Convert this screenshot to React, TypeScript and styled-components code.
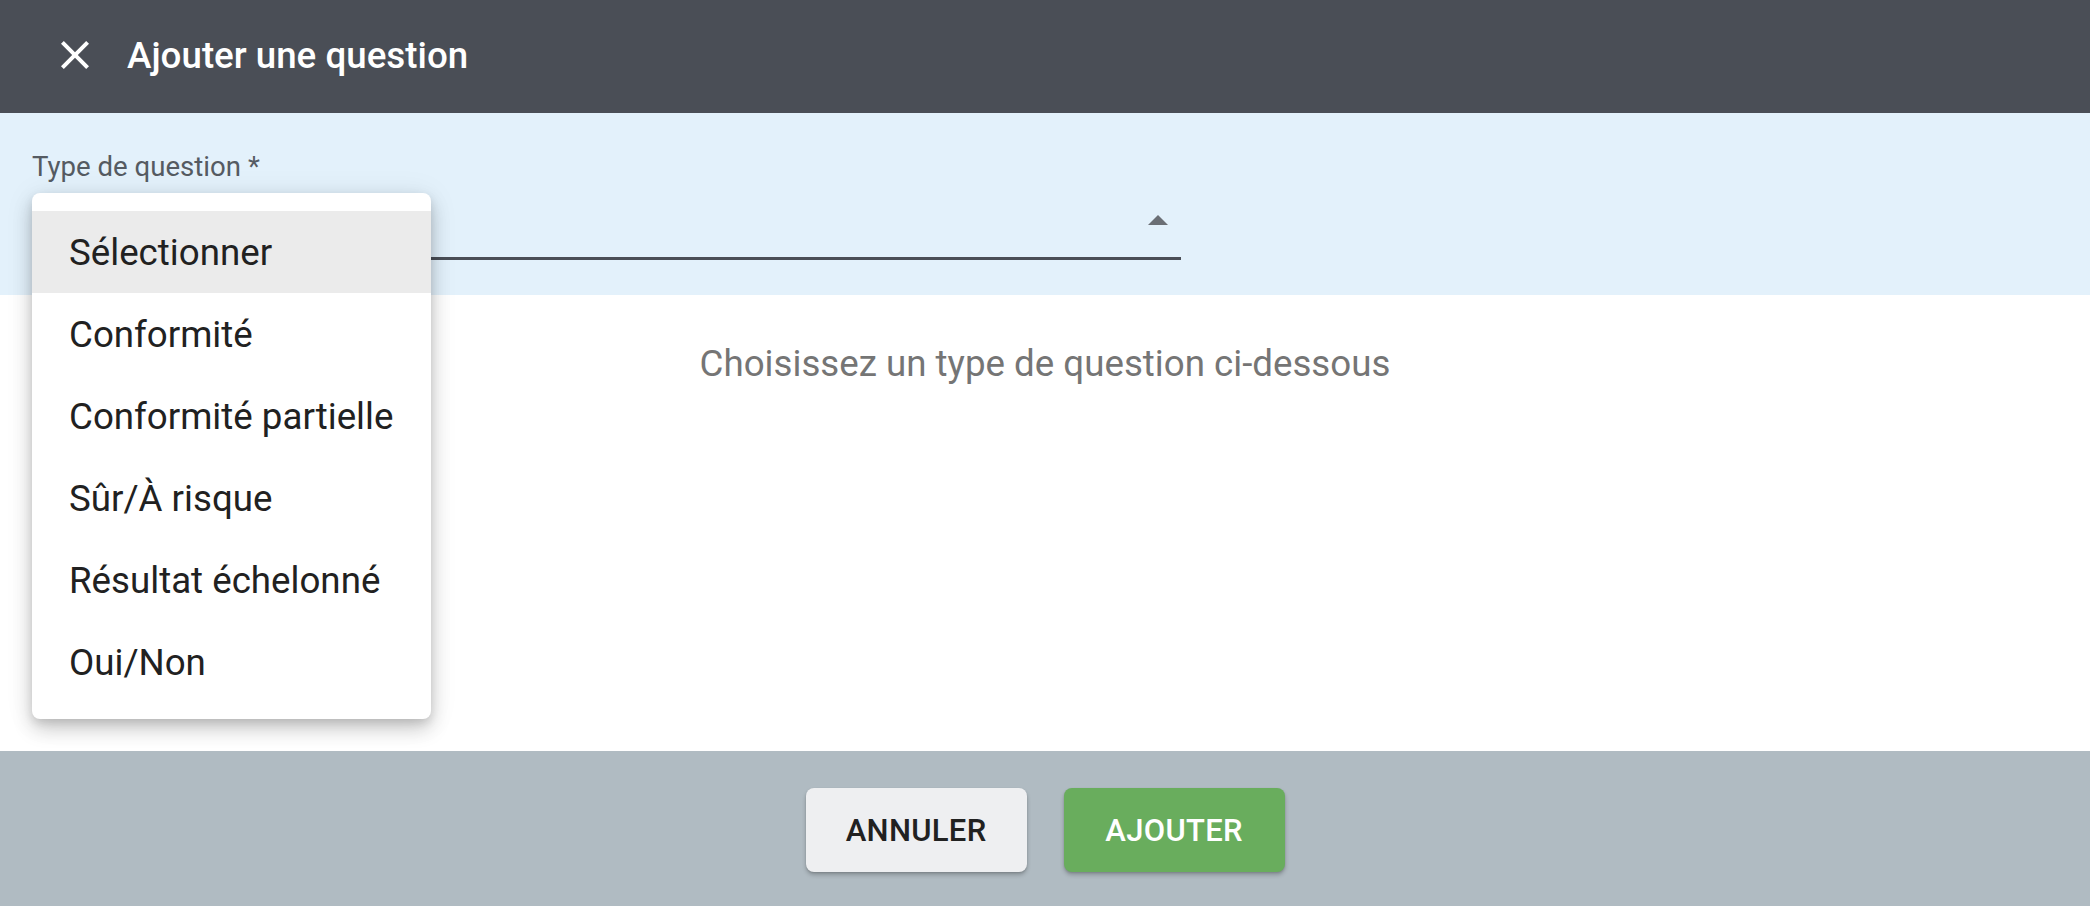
import styled, { createGlobalStyle } from "styled-components";
import { MdClose } from "react-icons/md";

const GlobalStyle = createGlobalStyle`
  html, body {
    margin: 0;
    padding: 0;
    background: #ffffff;
  }
  body {
    font-family: Roboto, "Noto Sans", sans-serif;
  }
`;

const medium = `"Roboto Medium", Roboto, "Noto Sans", sans-serif`;

const Page = styled.div`
  display: flex;
  flex-direction: column;
  width: 100%;
  height: 100vh;
  overflow: hidden;
`;

const Header = styled.header`
  position: relative;
  z-index: 2;
  display: flex;
  align-items: center;
  flex-shrink: 0;
  height: 113px;
  padding: 0 0 3px 51px;
  box-sizing: border-box;
  background: #4a4e56;
  box-shadow: 0 3px 10px rgba(0, 0, 0, 0.22);
`;

const CloseButton = styled.button`
  display: flex;
  align-items: center;
  justify-content: center;
  width: 48px;
  height: 48px;
  padding: 0;
  border: none;
  background: transparent;
  color: #ffffff;
  cursor: pointer;
  svg {
    width: 48px;
    height: 48px;
  }
`;

const Title = styled.h1`
  margin: 0 0 0 28px;
  font-family: ${medium};
  font-size: 36.7px;
  font-weight: 500;
  color: #ffffff;
`;

const FieldSection = styled.section`
  position: relative;
  z-index: 3;
  flex-shrink: 0;
  height: 182px;
  padding: 37px 32px 0;
  box-sizing: border-box;
  background: #e3f1fb;
`;

const Field = styled.div`
  position: relative;
  width: 1149px;
`;

const Label = styled.label`
  display: block;
  font-size: 27.6px;
  color: #555b62;
`;

const Select = styled.div`
  display: flex;
  align-items: center;
  justify-content: flex-end;
  height: 77px;
  padding-right: 13px;
  box-sizing: border-box;
  border-bottom: 3px solid #4a4e56;
`;

const Arrow = styled.span`
  width: 0;
  height: 0;
  border-left: 10px solid transparent;
  border-right: 10px solid transparent;
  border-bottom: 10px solid #6b6f75;
  margin-top: -1px;
`;

const Menu = styled.ul`
  position: absolute;
  top: 43px;
  left: 0;
  width: 399px;
  margin: 0;
  padding: 18px 0 16px;
  list-style: none;
  background: #ffffff;
  border-radius: 8px;
  box-shadow: 0 10px 20px rgba(0, 0, 0, 0.18), 0 4px 8px rgba(0, 0, 0, 0.1),
    0 2px 30px rgba(0, 0, 0, 0.08);
`;

const MenuItem = styled.li<{ $selected?: boolean }>`
  display: flex;
  align-items: center;
  height: 82px;
  padding-left: 37px;
  font-size: 36.7px;
  color: #212121;
  background: ${(p) => (p.$selected ? "#ebebeb" : "transparent")};
  cursor: pointer;
`;

const Content = styled.main`
  flex: 1;
  padding-top: 47px;
  text-align: center;
  background: #ffffff;
`;

const Hint = styled.p`
  margin: 0;
  font-size: 36.7px;
  color: #757575;
`;

const Footer = styled.footer`
  display: flex;
  align-items: center;
  justify-content: center;
  gap: 37px;
  flex-shrink: 0;
  height: 155px;
  padding-top: 3px;
  box-sizing: border-box;
  background: #b0bbc2;
`;

const Button = styled.button<{ $primary?: boolean }>`
  width: 221px;
  height: 84px;
  border: none;
  border-radius: 8px;
  font-family: ${medium};
  font-size: 31px;
  font-weight: 500;
  letter-spacing: 0.3px;
  text-transform: uppercase;
  color: ${(p) => (p.$primary ? "#ffffff" : "#212121")};
  background: ${(p) => (p.$primary ? "#69ad5d" : "#eeeff1")};
  box-shadow: 0 3px 4px rgba(0, 0, 0, 0.22), 0 1px 2px rgba(0, 0, 0, 0.12);
  cursor: pointer;
`;

const options = [
  "Sélectionner",
  "Conformité",
  "Conformité partielle",
  "Sûr/À risque",
  "Résultat échelonné",
  "Oui/Non",
];

export default function App() {
  return (
    <>
      <GlobalStyle />
      <Page>
        <Header>
          <CloseButton aria-label="Fermer">
            <MdClose />
          </CloseButton>
          <Title>Ajouter une question</Title>
        </Header>
        <FieldSection>
          <Field>
            <Label>Type de question *</Label>
            <Select>
              <Arrow />
            </Select>
            <Menu>
              {options.map((o, i) => (
                <MenuItem key={o} $selected={i === 0}>
                  {o}
                </MenuItem>
              ))}
            </Menu>
          </Field>
        </FieldSection>
        <Content>
          <Hint>Choisissez un type de question ci-dessous</Hint>
        </Content>
        <Footer>
          <Button>Annuler</Button>
          <Button $primary>Ajouter</Button>
        </Footer>
      </Page>
    </>
  );
}
